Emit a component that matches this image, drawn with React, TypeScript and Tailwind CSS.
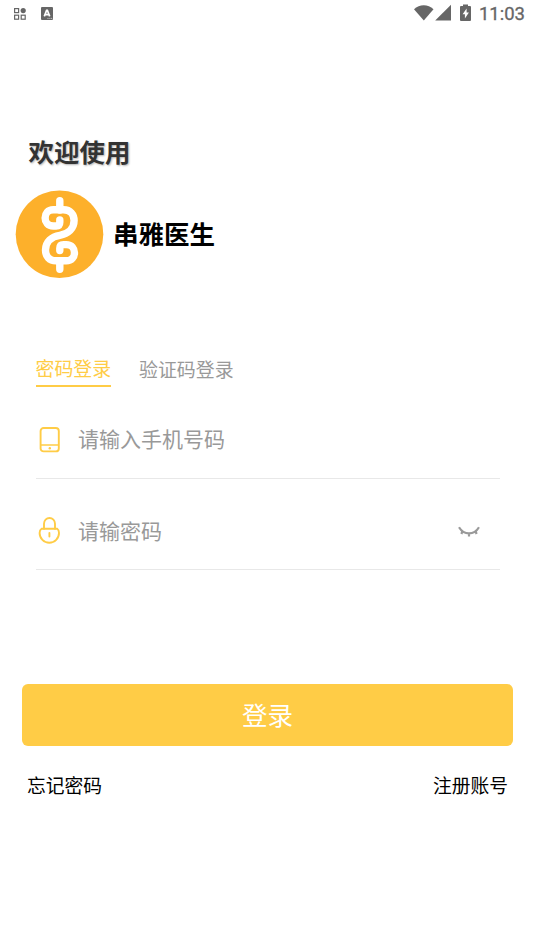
import { useState } from 'react';

const Logo: React.FC = () => (
  <svg viewBox="0 0 89 88" className="h-[88px] w-[89px] shrink-0">
    <circle cx="44.5" cy="44.2" r="43.8" fill="#fdb02b" />
    <g fill="none" stroke="#fff" strokeWidth="7.4" strokeLinecap="round" strokeLinejoin="round">
      <path d="M44.8 10.7V20M44.8 70.8V79.2" />
      <path d="M44.8 30V32.3Q44.8 36 41.1 36H38.3C27.4 36 27.4 19.8 38.3 19.8H48.5C55.5 19.8 59.1 24.5 59.1 30.5C59.1 38.6 53 44 44.8 45.3C36.6 46.6 30.5 52 30.5 60.1C30.5 66.1 34.1 70.8 41.1 70.8H51.3C62.2 70.8 62.2 54.6 51.3 54.6H48.5Q44.8 54.6 44.8 58.3V60.6" />
    </g>
  </svg>
);

const StatusBar: React.FC = () => (
  <header className="flex h-[27px] items-center justify-between pl-3.5 pr-[9px] text-[#666]">
    <div className="flex items-center gap-[15px]">
      <svg viewBox="0 0 12 12" className="h-3 w-3" fill="none" stroke="currentColor" strokeWidth="1.2">
        <rect x=".6" y=".6" width="4" height="4" />
        <circle cx="9.2" cy="2.6" r="2.6" fill="currentColor" stroke="none" />
        <rect x=".6" y="7.2" width="4" height="4" />
        <rect x="7.2" y="7.2" width="4" height="4" />
      </svg>
      <svg viewBox="0 0 12 13" className="h-[13px] w-3">
        <rect width="12" height="13" rx="1" fill="currentColor" />
        <path d="M3.3 9.4L5.6 3.4H6.4L8.7 9.4M4.4 7.6H7.6" fill="none" stroke="#fff" strokeWidth="1.7" />
        <path d="M6.5 11.4h1M8.4 11.4h1M10.2 11.4h1" stroke="#fff" strokeWidth=".7" />
      </svg>
    </div>
    <div className="flex items-center">
      <svg viewBox="0 0 58 18" className="mb-px h-[18px] w-[58px]" fill="currentColor">
        <path d="M0 5.2C5.5-.2 14-.2 19.5 5.2L9.8 16.5z" />
        <path d="M37 .8V16.5H21.2z" />
        <path d="M49 2V.4h5V2h2q1 0 1 1v13q0 1-1 1h-9q-1 0-1-1V3q0-1 1-1z" />
        <path d="M52.6 4.5L48.6 10.2h2.3v4.3l4-6h-2.3z" fill="#fff" />
      </svg>
      <span className="ml-[7px] pt-0.5 font-[Roboto] text-[18.5px] leading-none [-webkit-text-stroke:0.3px_#666]">
        11:03
      </span>
    </div>
  </header>
);

const PhoneIcon: React.FC = () => (
  <svg viewBox="0 0 22 26" className="h-[26px] w-[22px]" fill="none" stroke="#ffcc46" strokeWidth="1.9">
    <rect x="2.6" y="1" width="18.2" height="23.4" rx="3" />
    <path d="M2.6 18H20.8" strokeWidth="1.5" />
    <circle cx="11.8" cy="21.2" r="1.2" fill="#ffcc46" stroke="none" />
  </svg>
);

const LockIcon: React.FC = () => (
  <svg viewBox="0 0 22 27" className="mb-px h-[27px] w-[22px]" fill="none" stroke="#ffcc46" strokeWidth="1.9" strokeLinecap="round">
    <path d="M6 11.8V6.8a5.5 5.8 0 0 1 11 0v5" />
    <path d="M3.6 11.8H19.2Q21 13 21 16A9.7 9.8 0 0 1 1.6 16Q1.6 13 3.6 11.8z" />
    <path d="M11.4 16v3.5" />
  </svg>
);

const ClosedEyeIcon: React.FC = () => (
  <svg viewBox="0 0 22 11" className="h-[11px] w-[22px]" fill="none" stroke="#999" strokeWidth="2.2">
    <path d="M1 1.2C6 9.4 16 9.4 21 1.2M4.5 5L3.4 8M11 7.2V10.5M17.5 5L18.6 8" />
  </svg>
);

const inputClass =
  'mb-[3px] ml-[18.5px] min-w-0 flex-1 bg-transparent text-[21px] leading-[30px] text-[#333] outline-none placeholder:text-[#999]';

export default function App() {
  const [tab, setTab] = useState<'password' | 'code'>('password');
  const active = 'border-[#ffcc46] text-[#ffcc46]';
  const idle = 'border-transparent text-[#999]';

  return (
    <div className="h-[950px] w-[534px] overflow-hidden bg-white font-['Noto_Sans_CJK_SC',sans-serif]">
      <StatusBar />

      <h1 className="ml-[28.5px] mt-[105px] text-[25.5px] font-bold leading-[38px] text-[#333] [text-shadow:1px_1px_2px_rgba(0,0,0,0.3)]">
        欢迎使用
      </h1>
      <div className="ml-[15px] mt-5 flex items-center">
        <Logo />
        <span className="mb-0.5 ml-[9px] text-[25.5px] font-bold leading-[38px] text-black">串雅医生</span>
      </div>

      <div className="ml-[35.5px] mt-[75px] flex gap-7 text-[18.9px] leading-[30px]">
        <button className={`h-[34px] border-b-2 pb-0.5 ${tab === 'password' ? active : idle}`} onClick={() => setTab('password')}>
          密码登录
        </button>
        <button className={`h-[34px] border-b-2 pb-px ${tab === 'code' ? active : idle}`} onClick={() => setTab('code')}>
          验证码登录
        </button>
      </div>

      <form className="ml-[35.5px] mr-[34px]">
        <label className="flex h-[92px] items-center border-b border-[#e8e8e8] pl-0.5 pt-[14px]">
          <PhoneIcon />
          <input type="tel" placeholder="请输入手机号码" className={inputClass} />
        </label>
        <label className="flex h-[91px] items-center border-b border-[#e8e8e8] pl-0.5 pr-5 pt-[14px]">
          <LockIcon />
          <input type="password" placeholder="请输密码" className={inputClass} />
          <ClosedEyeIcon />
        </label>
      </form>

      <div className="ml-[22px] mr-[21px] mt-[114px]">
        <button className="h-[62px] w-full rounded-md bg-[#ffcc46] pb-0.5 text-[25.5px] text-white">登录</button>
        <div className="mt-[25px] flex justify-between px-[5px] text-[18.75px] leading-[27px] text-black">
          <a>忘记密码</a>
          <a>注册账号</a>
        </div>
      </div>
    </div>
  );
}
